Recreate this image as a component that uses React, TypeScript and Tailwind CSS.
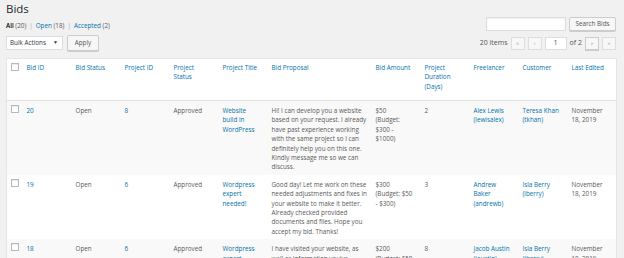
const rows = [
  {
    id: '20',
    status: 'Open',
    projectId: '8',
    projectStatus: 'Approved',
    title: ['Website', 'build in', 'WordPress'],
    proposal: [
      'Hi! I can develop you a website',
      'based on your request. I already',
      'have past experience working',
      'with the same project so I can',
      'definitely help you on this one.',
      'Kindly message me so we can',
      'discuss.',
    ],
    amount: ['$50', '(Budget:', '$300 -', '$1000)'],
    duration: '2',
    freelancer: ['Alex Lewis', '(lewisalex)'],
    customer: ['Teresa Khan', '(tkhan)'],
    edited: ['November', '18, 2019'],
  },
  {
    id: '19',
    status: 'Open',
    projectId: '6',
    projectStatus: 'Approved',
    title: ['Wordpress', 'expert', 'needed!'],
    proposal: [
      'Good day! Let me work on these',
      'needed adjustments and fixes in',
      'your website to make it better.',
      'Already checked provided',
      'documents and files. Hope you',
      'accept my bid. Thanks!',
    ],
    amount: ['$300', '(Budget: $50', '- $300)'],
    duration: '3',
    freelancer: ['Andrew', 'Baker', '(andrewb)'],
    customer: ['Isla Berry', '(iberry)'],
    edited: ['November', '18, 2019'],
  },
  {
    id: '18',
    status: 'Open',
    projectId: '6',
    projectStatus: 'Approved',
    title: ['Wordpress', 'expert', 'needed!'],
    proposal: [
      'I have visited your website, as',
      "well as information you've",
      'provided. I can work on it',
    ],
    amount: ['$200', '(Budget: $50', '- $300)'],
    duration: '8',
    freelancer: ['Jacob Austin', '(jaustin)'],
    customer: ['Isla Berry', '(iberry)'],
    edited: ['November', '18, 2019'],
  },
];

function Lines({ lines }: { lines: string[] }) {
  return (
    <>
      {lines.map((l, i) => (
        <span key={i} className="block whitespace-nowrap">
          {l}
        </span>
      ))}
    </>
  );
}

function Checkbox() {
  return <span className="block w-[8px] h-[8px] border border-[#b4b9be] bg-white shadow-[inset_0_1px_1px_rgba(0,0,0,0.08)]" />;
}

const headers: { label: string[]; w: string }[] = [
  { label: ['Bid ID'], w: 'w-[49px]' },
  { label: ['Bid Status'], w: 'w-[49px]' },
  { label: ['Project ID'], w: 'w-[49px]' },
  { label: ['Project', 'Status'], w: 'w-[49px]' },
  { label: ['Project Title'], w: 'w-[49px]' },
  { label: ['Bid Proposal'], w: 'w-[104px]' },
  { label: ['Bid Amount'], w: 'w-[49px]' },
  { label: ['Project', 'Duration', '(Days)'], w: 'w-[49px]' },
  { label: ['Freelancer'], w: 'w-[49px]' },
  { label: ['Customer'], w: 'w-[49px]' },
  { label: ['Last Edited'], w: 'w-[46px]' },
];

export default function App() {
  return (
    <div className="min-h-screen w-[624px] h-[258px] overflow-hidden bg-[#f1f1f1] pl-[6px] pr-[8px] font-['Open_Sans',sans-serif] text-[6.3px] text-[#5a5a5a]">
      <h1 className="text-[11.5px] leading-[14px] pt-[2px] text-[#23282d]">Bids</h1>

      <div className="flex items-end justify-between h-[14px] mt-[1px]">
        <div className="pb-[1px] text-[6.3px] leading-[9px]">
          <span className="font-semibold text-black">All</span> <span className="text-[#555]">(20)</span>
          <span className="text-[#aaa] px-[3px]">|</span>
          <span className="text-[#0073aa]">Open</span> <span>(18)</span>
          <span className="text-[#aaa] px-[3px]">|</span>
          <span className="text-[#0073aa]">Accepted</span> <span>(2)</span>
        </div>
        <div className="flex items-center gap-[3px]">
          <div className="w-[80px] h-[14px] bg-white border border-[#ddd] shadow-[inset_0_1px_2px_rgba(0,0,0,0.07)]" />
          <button className="h-[14px] w-[47px] bg-[#f7f7f7] border border-[#ccc] rounded-[2px] text-[6.3px] text-[#555] shadow-[0_1px_0_#ccc]">
            Search Bids
          </button>
        </div>
      </div>

      <div className="flex items-center justify-between mt-[4px] h-[16px]">
        <div className="flex items-center gap-[4px]">
          <div className="w-[57px] h-[14px] bg-white border border-[#ddd] flex items-center justify-between pl-[3px] pr-[4px] text-[6.3px] text-[#32373c]">
            <span>Bulk Actions</span>
            <span className="text-[5px] text-[#333]">▼</span>
          </div>
          <button className="h-[16px] w-[32px] bg-[#f7f7f7] border border-[#ccc] rounded-[2px] text-[6.3px] text-[#555] shadow-[0_1px_0_#ccc]">
            Apply
          </button>
        </div>
        <div className="flex items-center text-[7px] text-[#555]">
          <span className="mr-[3px]">20 items</span>
          <span className="w-[14px] h-[13px] border border-[#ddd] bg-[#f7f7f7] text-[#a0a5aa] text-[6px] flex items-center justify-center">«</span>
          <span className="ml-[3px] w-[14px] h-[13px] border border-[#ddd] bg-[#f7f7f7] text-[#a0a5aa] text-[6px] flex items-center justify-center">‹</span>
          <span className="ml-[3px] w-[22px] h-[13px] border border-[#ddd] bg-white text-[6.3px] flex items-center justify-center text-[#32373c]">1</span>
          <span className="ml-[3px] mr-[3px]">of 2</span>
          <span className="w-[14px] h-[13px] border border-[#ccc] bg-[#f7f7f7] text-[#555] text-[6px] flex items-center justify-center shadow-[0_1px_0_#ccc]">›</span>
          <span className="ml-[3px] w-[14px] h-[13px] border border-[#ddd] bg-[#f7f7f7] text-[#a0a5aa] text-[6px] flex items-center justify-center">»</span>
        </div>
      </div>

      <table className="mt-[7px] table-fixed border-collapse w-[610px] bg-white border border-[#e5e5e5] leading-[9.4px]">
        <thead>
          <tr className="border-b border-[#e1e1e1] align-top">
            <th className="w-[19px] pl-[4px] pt-[4px] h-[42px]">
              <Checkbox />
            </th>
            {headers.map((h) => (
              <th key={h.label.join()} className={`${h.w} pl-px pt-[4px] text-left font-normal text-[#0073aa]`}>
                <Lines lines={h.label} />
              </th>
            ))}
          </tr>
        </thead>
        <tbody>
          {rows.map((r, i) => (
            <tr key={r.id} className={`align-top ${i % 2 === 0 ? 'bg-[#f9f9f9]' : 'bg-white'}`}>
              <td className="pl-[4px] pt-[4px] pb-[3px]">
                <Checkbox />
              </td>
              <td className="pl-px pt-[5px] pb-[3px] text-[#0073aa]">{r.id}</td>
              <td className="pl-px pt-[5px] pb-[3px]">{r.status}</td>
              <td className="pl-px pt-[5px] pb-[3px] text-[#0073aa]">{r.projectId}</td>
              <td className="pl-px pt-[5px] pb-[3px]">{r.projectStatus}</td>
              <td className="pl-px pt-[5px] pb-[3px] text-[#0073aa]">
                <Lines lines={r.title} />
              </td>
              <td className="pl-px pt-[5px] pb-[3px]">
                <Lines lines={r.proposal} />
              </td>
              <td className="pl-px pt-[5px] pb-[3px]">
                <Lines lines={r.amount} />
              </td>
              <td className="pl-px pt-[5px] pb-[3px]">{r.duration}</td>
              <td className="pl-px pt-[5px] pb-[3px] text-[#0073aa]">
                <Lines lines={r.freelancer} />
              </td>
              <td className="pl-px pt-[5px] pb-[3px] text-[#0073aa]">
                <Lines lines={r.customer} />
              </td>
              <td className="pl-px pt-[5px] pb-[3px]">
                <Lines lines={r.edited} />
              </td>
            </tr>
          ))}
        </tbody>
      </table>
    </div>
  );
}
